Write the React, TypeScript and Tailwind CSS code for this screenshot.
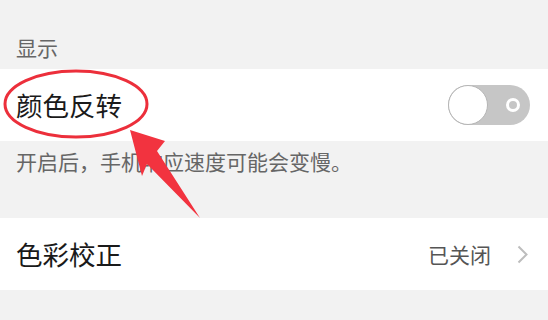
import React from "react";

const font = { fontFamily: '"Noto Sans CJK SC", "Noto Sans", sans-serif' };

export default function App() {
  return (
    <div className="relative w-[548px] h-[320px] overflow-hidden bg-[#f2f2f2]" style={font}>
      {/* Section header */}
      <div className="h-[69px] px-4 pt-[33px] text-[21px] leading-[28px] text-[#666]">显示</div>

      {/* Invert colors row */}
      <div className="h-[72px] bg-white flex items-center justify-between pl-4 pr-[18px]">
        <span className="text-[26.5px] leading-none text-[#1a1a1a]">颜色反转</span>
        <div className="relative w-[82px] h-[40px] rounded-full bg-[#c6c6c6]">
          <div className="absolute left-0 top-0 w-[40px] h-[40px] rounded-full bg-white border border-[#b5b5b5]" />
          <div className="absolute left-[58px] top-[13px] w-[14px] h-[14px] rounded-full border-[3px] border-white" />
        </div>
      </div>

      {/* Description */}
      <div className="h-[77px] px-4 pt-[6px] text-[21px] leading-[28px] text-[#666]">
        开启后，手机响应速度可能会变慢。
      </div>

      {/* Color correction row */}
      <div className="h-[72px] bg-white flex items-center justify-between pl-4 pr-[20px]">
        <span className="text-[26.5px] leading-none text-[#1a1a1a]">色彩校正</span>
        <div className="flex items-center gap-[26px]">
          <span className="text-[21px] leading-none text-[#555]">已关闭</span>
          <svg width="11" height="19" viewBox="0 0 11 19">
            <polyline points="1.5,1.5 9.5,9.5 1.5,17.5" fill="none" stroke="#bdbdbd" strokeWidth="2" />
          </svg>
        </div>
      </div>

      {/* Red annotation */}
      <svg className="absolute left-0 top-0 pointer-events-none" width="548" height="320" viewBox="0 0 548 320">
        <ellipse cx="76" cy="104" rx="71" ry="33" fill="none" stroke="#ec2f3b" strokeWidth="3" />
        <polygon points="130,130 165,141 157,151 200,218 147,164 142,176" fill="#f2333f" />
      </svg>
    </div>
  );
}
